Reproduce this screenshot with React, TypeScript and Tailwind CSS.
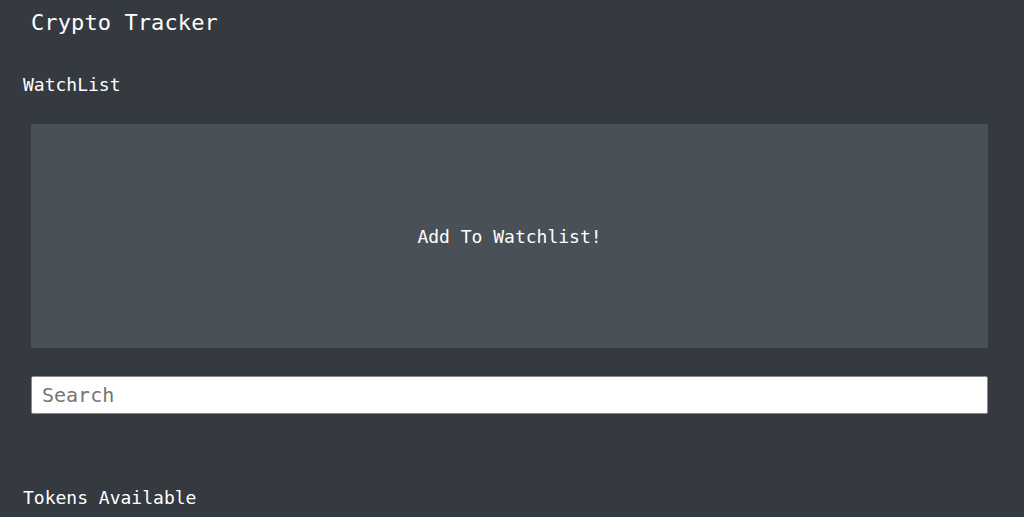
import React from "react";

export default function App() {
  return (
    <div
      className="min-h-screen bg-[#343a40] text-white"
      style={{ fontFamily: '"DejaVu Sans Mono", "Liberation Mono", monospace' }}
    >
      <h1 className="h-[44px] flex items-center pl-[31px] text-[22px] font-normal tracking-[0.1px]">
        Crypto Tracker
      </h1>
      <h2 className="mt-[27px] pl-[23px] text-[18px] leading-[27px] font-normal">WatchList</h2>
      <div className="mt-[26px] ml-[31px] w-[957px] h-[224px] bg-[#495057] flex items-center justify-center text-[18px]">
        Add To Watchlist!
      </div>
      <div className="mt-[28px] ml-[31px] w-[957px]">
        <input
          type="text"
          placeholder="Search"
          className="w-full h-[38px] bg-white border border-[#8a8a8a] rounded-[2px] px-[10px] text-[20px] text-black placeholder:text-[#757575] outline-none"
          style={{ fontFamily: '"DejaVu Sans Mono", "Liberation Mono", monospace' }}
        />
      </div>
      <h2 className="mt-[70px] pl-[23px] text-[18px] leading-[27px] font-normal">Tokens Available</h2>
    </div>
  );
}
